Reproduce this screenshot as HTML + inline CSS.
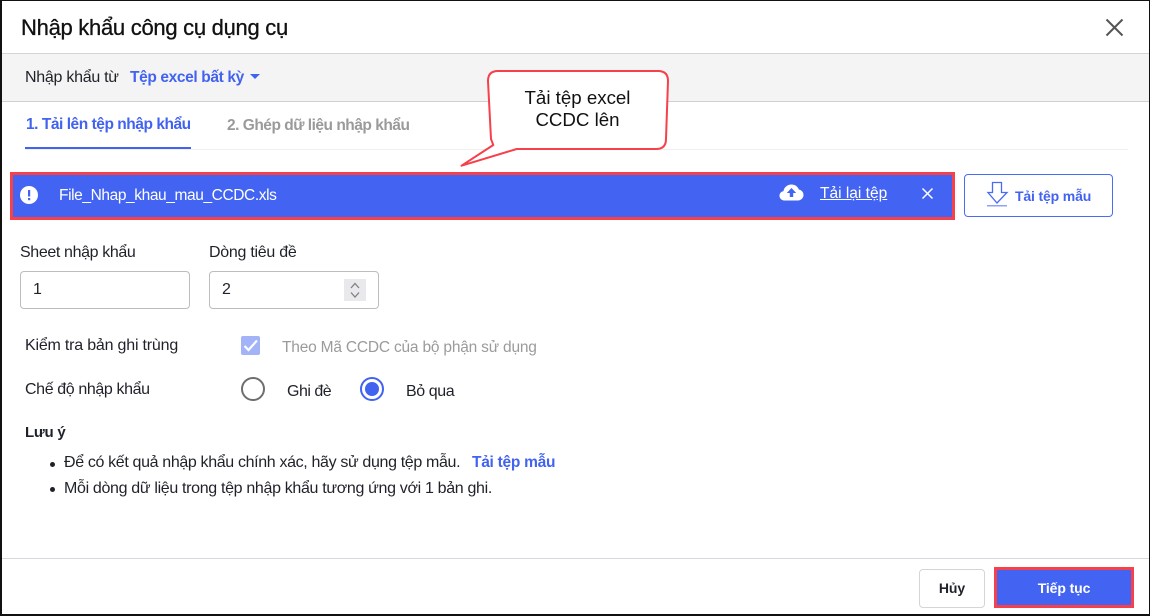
<!DOCTYPE html>
<html>
<head>
<meta charset="utf-8">
<style>
html,body{margin:0;padding:0;width:1151px;height:616px;overflow:hidden;background:#fff}
body{position:relative;font-family:"Liberation Sans","Noto Sans CJK SC",sans-serif;color:#1f2229}
.t{position:absolute;white-space:nowrap;font-size:16px;line-height:20px;letter-spacing:-.35px}
.b{font-weight:700}
.a{position:absolute;box-sizing:border-box}
.blue{color:#4262f0}
</style>
</head>
<body>
<!-- frame -->
<div class="a" style="left:0;top:0;width:1150px;height:616px;border:1px solid #111;border-left-width:2px;border-bottom-width:2px"></div>

<div class="t" style="left:21px;top:15px;font-size:22px;line-height:26px;color:#111;letter-spacing:-.28px;-webkit-text-stroke:.3px #111">Nhập khẩu công cụ dụng cụ</div>
<svg class="a" style="left:1104px;top:17px" width="21" height="21" viewBox="0 0 21 21"><path d="M2.5 2.5L18.5 18.5M18.5 2.5L2.5 18.500" stroke="#555" stroke-width="2" fill="none"/></svg>

<!-- source bar -->
<div class="a" style="left:2px;top:53px;width:1147px;height:49px;background:#f4f4f4;border-top:1px solid #d4d4d4;border-bottom:1px solid #d0d0d0"></div>
<div class="t" style="left:25px;top:68px;letter-spacing:-.27px">Nhập khẩu từ</div>
<div class="t b blue" style="left:130px;top:68px;font-size:15.5px;letter-spacing:-.37px">Tệp excel bất kỳ</div>
<div class="a" style="left:250px;top:74px;width:0;height:0;border-left:5px solid transparent;border-right:5px solid transparent;border-top:5px solid #4262f0"></div>

<!-- tabs -->
<div class="t b blue" style="left:26px;top:115px;font-size:15.5px;letter-spacing:-.46px">1. Tải lên tệp nhập khẩu</div>
<div class="t b" style="left:227px;top:116px;color:#9a9a9a;font-size:15.5px;letter-spacing:-.49px">2. Ghép dữ liệu nhập khẩu</div>
<div class="a" style="left:25px;top:149px;width:1103px;height:1px;background:#efefef"></div>
<div class="a" style="left:25px;top:147px;width:166px;height:2px;background:#4262f0"></div>

<!-- file bar -->
<div class="a" style="left:10px;top:172px;width:945px;height:48px;background:#4364f2;border:3px solid #f6404a"></div>
<svg class="a" style="left:20px;top:186px" width="18" height="18" viewBox="0 0 18 18"><circle cx="9" cy="9" r="9" fill="#fff"/><rect x="8" y="4" width="2.2" height="6.5" fill="#4364f2"/><rect x="8" y="12" width="2.2" height="2.2" fill="#4364f2"/></svg>
<div class="t" style="left:59px;top:186px;color:#fff;font-size:15.500px;letter-spacing:-.4px">File_Nhap_khau_mau_CCDC.xls</div>
<svg class="a" style="left:779px;top:184px" width="25" height="17" viewBox="0 0 25 17"><path d="M6 16.500C2.500 16.500 .5 14.300 .5 11.700C.5 9.300 2.200 7.500 4.500 7.100C5 3.500 8.300 .5 12.500 .5C16 .5 18.800 2.500 19.800 5.500C22.500 6 24.500 8.200 24.500 11C24.500 14 22 16.500 18.800 16.500Z" fill="#fff"/><path d="M12.500 4L7.800 9H10.800V13H14.200V9H17.200Z" fill="#4364f2"/></svg>
<div class="t" style="left:820px;top:184px;color:#fff;text-decoration:underline;font-size:15.500px;letter-spacing:0">Tải lại tệp</div>
<svg class="a" style="left:921px;top:187px" width="13" height="13" viewBox="0 0 13 13"><path d="M1.500 1.500L11.500 11.500M11.500 1.500L1.500 11.500" stroke="#fff" stroke-width="1.500" fill="none"/></svg>

<!-- download template -->
<div class="a" style="left:964px;top:174px;width:149px;height:43px;border:1px solid #4a6cf2;border-radius:4px"></div>
<svg class="a" style="left:985px;top:181px" width="24" height="29" viewBox="0 0 24 29"><path d="M7.500 1.500H16.500V11.500H22L12 22L3 11.500H7.500Z" fill="none" stroke="#4a6cf2" stroke-width="1.300"/><rect x="2" y="24" width="20" height="1.500" fill="#8fa3f5"/></svg>
<div class="t b blue" style="left:1015px;top:186px;font-size:14px;letter-spacing:-.15px">Tải tệp mẫu</div>

<!-- inputs -->
<div class="t" style="left:20px;top:243px;letter-spacing:-.37px">Sheet nhập khẩu</div>
<div class="t" style="left:209px;top:243px;letter-spacing:-.27px">Dòng tiêu đề</div>
<div class="a" style="left:20px;top:271px;width:170px;height:38px;border:1px solid #bdbdbd;border-radius:4px"></div>
<div class="t" style="left:33px;top:280px;font-size:16px">1</div>
<div class="a" style="left:209px;top:271px;width:170px;height:38px;border:1px solid #bdbdbd;border-radius:4px"></div>
<div class="t" style="left:222px;top:280px;font-size:16px">2</div>
<div class="a" style="left:344px;top:279px;width:22px;height:22px;background:#e9e9ed"></div>
<svg class="a" style="left:344px;top:279px" width="22" height="22" viewBox="0 0 22 22"><path d="M7 9L11 4.500L15 9M7 13.500L11 18L15 13.500" stroke="#808080" stroke-width="1.300" fill="none"/></svg>

<!-- check -->
<div class="t" style="left:25px;top:336px;letter-spacing:-.2px">Kiểm tra bản ghi trùng</div>
<div class="a" style="left:241px;top:336px;width:19px;height:19px;background:#a3b3f8;border-radius:2px"></div>
<svg class="a" style="left:241px;top:336px" width="19" height="19" viewBox="0 0 19 19"><path d="M3.500 10L7.500 14L16 4.500" stroke="#fff" stroke-width="2.200" fill="none"/></svg>
<div class="t" style="left:282px;top:338px;color:#9b9b9b;font-size:15.500px;letter-spacing:-.2px">Theo Mã CCDC của bộ phận sử dụng</div>

<!-- radio -->
<div class="t" style="left:25px;top:380px;letter-spacing:-.38px">Chế độ nhập khẩu</div>
<div class="a" style="left:241px;top:377px;width:24px;height:24px;border:2px solid #6e6e6e;border-radius:50%"></div>
<div class="t" style="left:287px;top:382px;letter-spacing:-.5px">Ghi đè</div>
<div class="a" style="left:360px;top:377px;width:24px;height:24px;border:2px solid #4262f0;border-radius:50%"></div>
<div class="a" style="left:365px;top:382px;width:14px;height:14px;background:#4262f0;border-radius:50%"></div>
<div class="t" style="left:406px;top:382px;letter-spacing:-.42px">Bỏ qua</div>

<!-- notes -->
<div class="t b" style="left:25px;top:423px;font-size:15px;letter-spacing:-.25px">Lưu ý</div>
<div class="a" style="left:50px;top:462px;width:5px;height:5px;background:#1f2229;border-radius:50%"></div>
<div class="t" style="left:64px;top:453px;letter-spacing:-.35px">Để có kết quả nhập khẩu chính xác, hãy sử dụng tệp mẫu.</div>
<div class="t b blue" style="left:472px;top:453px;font-size:15.500px;letter-spacing:-.27px">Tải tệp mẫu</div>
<div class="a" style="left:50px;top:487px;width:5px;height:5px;background:#1f2229;border-radius:50%"></div>
<div class="t" style="left:64px;top:479px;letter-spacing:-.33px">Mỗi dòng dữ liệu trong tệp nhập khẩu tương ứng với 1 bản ghi.</div>

<!-- footer -->
<div class="a" style="left:2px;top:558px;width:1147px;height:1px;background:#d6d9dd"></div>
<div class="a" style="left:919px;top:569px;width:66px;height:39px;border:1px solid #d5d5d5;border-radius:4px"></div>
<div class="t b" style="left:919px;top:578px;width:66px;text-align:center;font-size:14px;letter-spacing:-.1px">Hủy</div>
<div class="a" style="left:994px;top:567px;width:140px;height:41px;background:#4364f2;border:3px solid #f6404a"></div>
<div class="t b" style="left:994px;top:578px;width:140px;text-align:center;color:#fff;font-size:14px;letter-spacing:-.1px">Tiếp tục</div>

<!-- callout -->
<svg class="a" style="left:450px;top:60px" width="230" height="120" viewBox="0 0 230 120"><path d="M48 11H208Q218 11 218 21L216 79Q216 89 206 89H66.700L11.500 105.700L43.300 85L41 79L38 21Q38 11 48 11Z" fill="#fff" stroke="#f6404a" stroke-width="2" stroke-linejoin="round"/></svg>
<div class="t" style="left:489px;top:87px;width:177px;text-align:center;font-size:18.700px;line-height:22px;color:#111;letter-spacing:0">Tải tệp excel<br>CCDC lên</div>
</body>
</html>
